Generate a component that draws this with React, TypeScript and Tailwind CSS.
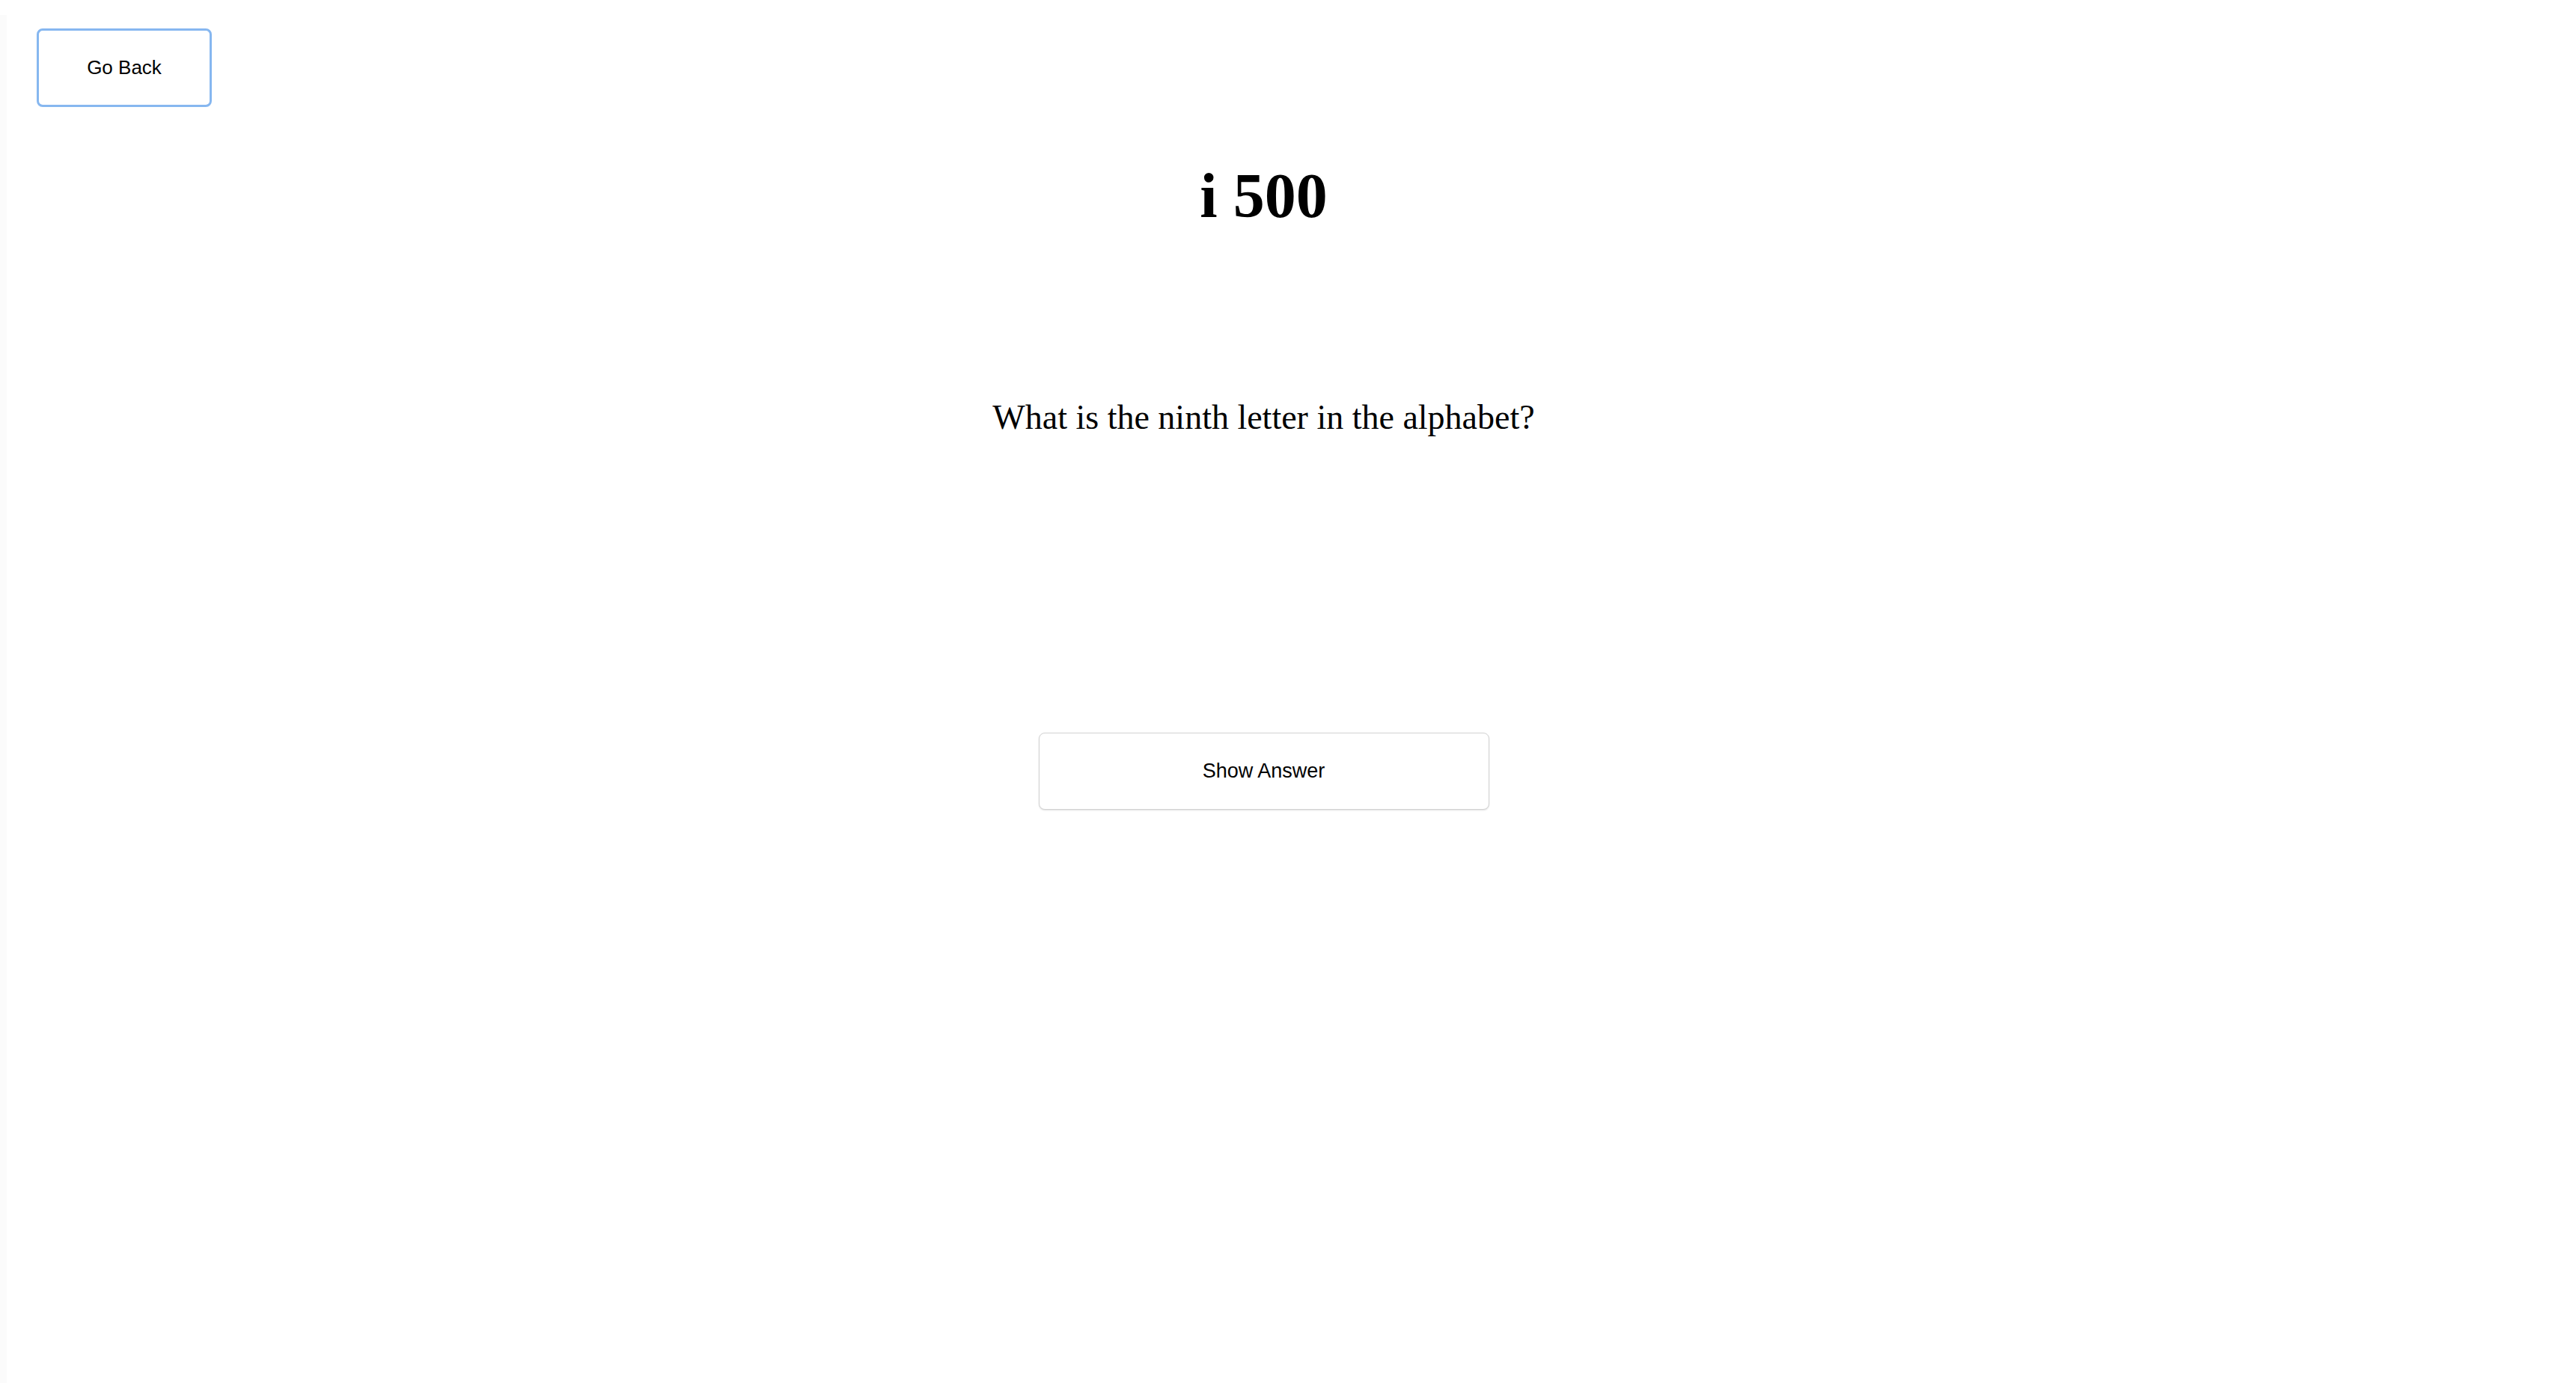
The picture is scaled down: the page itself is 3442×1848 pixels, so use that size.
export default function App() {
  return (
    <div className="flex min-h-[1848px] w-full bg-white text-black">
      {/* faint left edge */}
      <div className="mt-[20px] w-[9px] shrink-0 bg-[#fbfbfb]" />

      <main className="flex flex-1 flex-col pr-[74px]">
        <div className="pl-[40px] pt-[38px]">
          <button className="h-[105px] w-[234px] rounded-[8px] border-[3px] border-[#86b7f0] bg-white text-[26px] text-black [font-family:'Liberation_Sans',Arial,sans-serif]">
            Go Back
          </button>
        </div>

        <h1 className="mt-[77px] text-center text-[84px] font-bold leading-none [font-family:'Liberation_Serif','Times_New_Roman',serif]">
          i 500
        </h1>

        <p className="mt-[231px] text-center text-[46px] leading-none [font-family:'Liberation_Serif','Times_New_Roman',serif]">
          What is the ninth letter in the alphabet?
        </p>

        <div className="mt-[398px] flex justify-center">
          <button className="h-[103px] w-[602px] rounded-[8px] border border-[#d2d2d2] bg-white text-[27px] text-black shadow-[0_1px_2px_rgba(0,0,0,0.12)] [font-family:'Liberation_Sans',Arial,sans-serif]">
            Show Answer
          </button>
        </div>
      </main>
    </div>
  );
}
